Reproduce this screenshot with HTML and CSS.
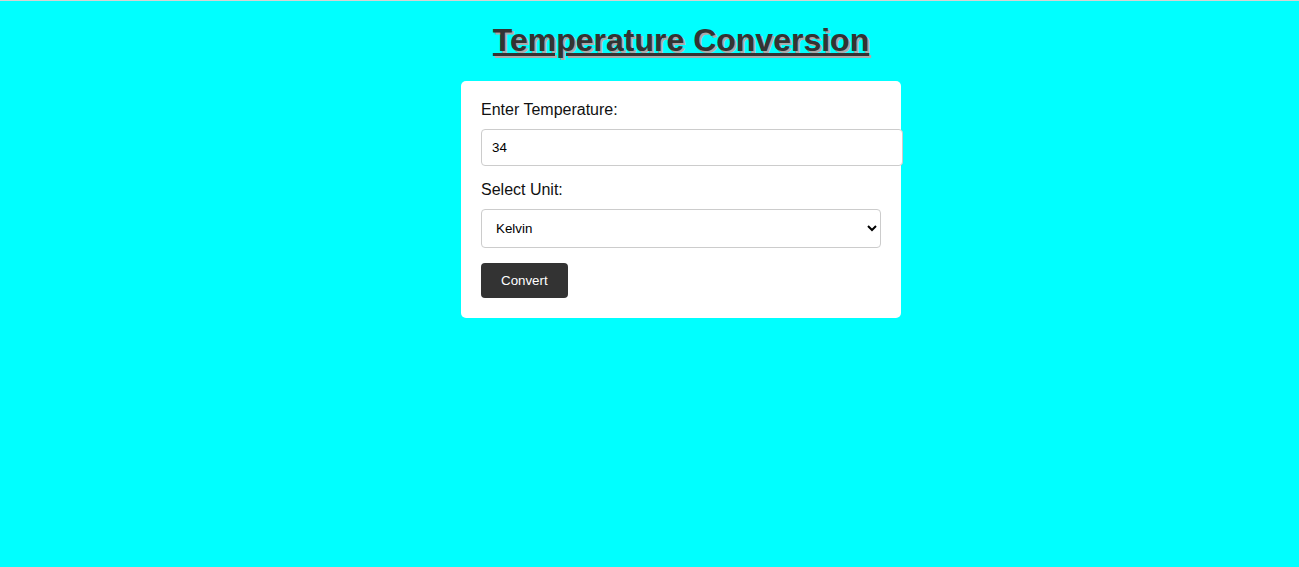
FILE: index.html
```html
<!DOCTYPE html>
<html lang="en">
<head>
<meta charset="utf-8">
<title>Temperature Conversion</title>
<link rel="stylesheet" href="styles.css">
</head>
<body>
  <h1 class="title">Temperature Conversion</h1>
  <div class="card">
    <label class="label" for="temp">Enter Temperature:</label>
    <input class="input" id="temp" type="number" value="34">
    <label class="label" for="unit">Select Unit:</label>
    <select class="select" id="unit">
      <option>Celsius</option>
      <option>Fahrenheit</option>
      <option selected>Kelvin</option>
    </select>
    <button class="btn" type="button">Convert</button>
  </div>
</body>
</html>
```
FILE: styles.css
```css
html {
  border-top: 1px solid #d4d4d4;
  background: #00ffff;
}
body {
  margin: 0 0 0 63px;
  font-family: "Liberation Sans", Arial, sans-serif;
  background: #00ffff;
  display: flex;
  flex-direction: column;
  align-items: center;
}
.title {
  font-size: 32px;
  font-weight: bold;
  color: #333;
  text-decoration: underline;
  text-shadow: 2px 2px #aaa;
  margin: 21.44px 0;
  text-align: center;
}
.card {
  background: #fff;
  width: 400px;
  padding: 20px;
  border-radius: 5px;
}
.label {
  display: block;
  font-size: 16px;
  color: #111;
  margin-bottom: 10px;
}
.input {
  display: block;
  width: 100%;
  padding: 10px;
  margin: 0 0 15px;
  border: 1px solid #ccc;
  border-radius: 4px;
  font-family: "Liberation Sans", Arial, sans-serif;
  font-size: 13.33px;
  color: #000;
  background: #fff;
  outline: none;
}
.input::-webkit-inner-spin-button,
.input::-webkit-outer-spin-button {
  -webkit-appearance: none;
  margin: 0;
}
.select {
  display: block;
  width: 100%;
  height: 39px;
  padding: 0 10px;
  margin: 0 0 15px;
  border: 1px solid #ccc;
  border-radius: 4px;
  font-family: "Liberation Sans", Arial, sans-serif;
  font-size: 13.33px;
  color: #000;
  background: #fff;
}
.btn {
  display: block;
  padding: 10px 20px;
  border: none;
  border-radius: 4px;
  background: #333;
  color: #fff;
  font-family: "Liberation Sans", Arial, sans-serif;
  font-size: 13.33px;
  cursor: pointer;
}
```
